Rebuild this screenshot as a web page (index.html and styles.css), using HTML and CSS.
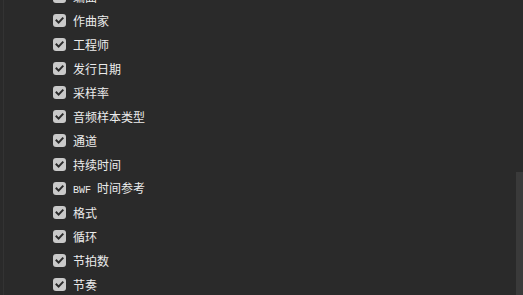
FILE: index.html
```html
<!DOCTYPE html>
<html lang="zh">
<head>
<meta charset="utf-8">
<link rel="stylesheet" href="styles.css">
</head>
<body>
<div class="panel">
  <div class="edge"></div>
  <ul class="list">
    <li class="row"><span class="cb"><svg viewBox="0 0 13 13"><path d="M3.5 6.5 L5.6 8.6 L9.6 4.4"/></svg></span><span class="label">编曲</span></li>
    <li class="row"><span class="cb"><svg viewBox="0 0 13 13"><path d="M3.5 6.5 L5.6 8.6 L9.6 4.4"/></svg></span><span class="label">作曲家</span></li>
    <li class="row"><span class="cb"><svg viewBox="0 0 13 13"><path d="M3.5 6.5 L5.6 8.6 L9.6 4.4"/></svg></span><span class="label">工程师</span></li>
    <li class="row"><span class="cb"><svg viewBox="0 0 13 13"><path d="M3.5 6.5 L5.6 8.6 L9.6 4.4"/></svg></span><span class="label">发行日期</span></li>
    <li class="row"><span class="cb"><svg viewBox="0 0 13 13"><path d="M3.5 6.5 L5.6 8.6 L9.6 4.4"/></svg></span><span class="label">采样率</span></li>
    <li class="row"><span class="cb"><svg viewBox="0 0 13 13"><path d="M3.5 6.5 L5.6 8.6 L9.6 4.4"/></svg></span><span class="label">音频样本类型</span></li>
    <li class="row"><span class="cb"><svg viewBox="0 0 13 13"><path d="M3.5 6.5 L5.6 8.6 L9.6 4.4"/></svg></span><span class="label">通道</span></li>
    <li class="row"><span class="cb"><svg viewBox="0 0 13 13"><path d="M3.5 6.5 L5.6 8.6 L9.6 4.4"/></svg></span><span class="label">持续时间</span></li>
    <li class="row"><span class="cb"><svg viewBox="0 0 13 13"><path d="M3.5 6.5 L5.6 8.6 L9.6 4.4"/></svg></span><span class="label"><span class="mono">BWF</span>时间参考</span></li>
    <li class="row"><span class="cb"><svg viewBox="0 0 13 13"><path d="M3.5 6.5 L5.6 8.6 L9.6 4.4"/></svg></span><span class="label">格式</span></li>
    <li class="row"><span class="cb"><svg viewBox="0 0 13 13"><path d="M3.5 6.5 L5.6 8.6 L9.6 4.4"/></svg></span><span class="label">循环</span></li>
    <li class="row"><span class="cb"><svg viewBox="0 0 13 13"><path d="M3.5 6.5 L5.6 8.6 L9.6 4.4"/></svg></span><span class="label">节拍数</span></li>
    <li class="row"><span class="cb"><svg viewBox="0 0 13 13"><path d="M3.5 6.5 L5.6 8.6 L9.6 4.4"/></svg></span><span class="label">节奏</span></li>
  </ul>
  <div class="scrollbar"><div class="thumb"></div></div>
</div>
</body>
</html>
```
FILE: styles.css
```css
html, body {
  margin: 0;
  padding: 0;
  background: #2a2a2a;
  overflow: hidden;
}
.panel {
  width: 523px;
  height: 295px;
  display: flex;
  overflow: hidden;
  background: #2a2a2a;
}
.edge {
  width: 1px;
  margin-left: 3px;
  background: #333333;
  flex: none;
}
.list {
  list-style: none;
  margin: -16px 0 0 0;
  padding: 0 0 0 49px;
  flex: 1;
}
.row {
  height: 24px;
  display: flex;
  align-items: center;
  gap: 7px;
}
.cb {
  width: 13px;
  height: 13px;
  border-radius: 3px;
  background: #c9c9c9;
  flex: none;
  display: flex;
}
.cb svg {
  width: 13px;
  height: 13px;
}
.cb path {
  fill: none;
  stroke: #2a2a2a;
  stroke-width: 2;
  stroke-linecap: square;
}
.label {
  font-family: "Noto Sans CJK SC", sans-serif;
  font-size: 12px;
  color: #ececec;
  line-height: 22px;
  padding-top: 2px;
}
.mono {
  font-family: "Liberation Mono", monospace;
  font-size: 10px;
  margin-right: 6px;
}
.scrollbar {
  width: 7px;
  flex: none;
  display: flex;
  flex-direction: column;
  justify-content: flex-end;
}
.thumb {
  height: 123px;
  background: #3a3a3a;
}
```
